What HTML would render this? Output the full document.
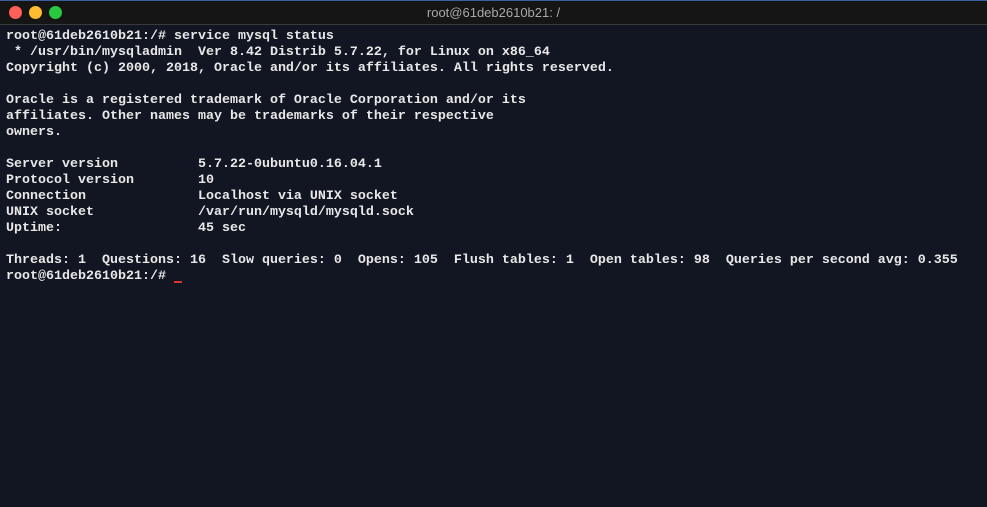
<!DOCTYPE html>
<html><head><style>
html,body{margin:0;padding:0;width:987px;height:507px;overflow:hidden;background:#121622;}
.tb{position:absolute;left:0;top:0;width:987px;height:25px;background:#151515;border-bottom:1px solid #3a3a3a;border-top:1px solid #3b5f9a;box-sizing:border-box;}
.d{position:absolute;top:5px;width:13px;height:13px;border-radius:50%;}
.t{position:absolute;left:0;right:0;top:4px;text-align:center;color:#a8a8a8;font:13px "Liberation Sans",sans-serif;}
pre{position:absolute;left:6px;top:29px;margin:0;font:bold 13.33px/16px "Liberation Mono",monospace;color:#e8e8e8;}
.cur{position:absolute;left:174px;top:281px;width:8px;height:2px;background:#e0302a;}
</style></head><body>
<div class="tb">
<div class="d" style="left:9px;background:#fe5f57"></div>
<div class="d" style="left:29px;background:#febc2e"></div>
<div class="d" style="left:49px;background:#28c840"></div>
<div class="t">root@61deb2610b21: /</div>
</div>
<pre>root@61deb2610b21:/# service mysql status
 * /usr/bin/mysqladmin  Ver 8.42 Distrib 5.7.22, for Linux on x86_64
Copyright (c) 2000, 2018, Oracle and/or its affiliates. All rights reserved.

Oracle is a registered trademark of Oracle Corporation and/or its
affiliates. Other names may be trademarks of their respective
owners.

Server version          5.7.22-0ubuntu0.16.04.1
Protocol version        10
Connection              Localhost via UNIX socket
UNIX socket             /var/run/mysqld/mysqld.sock
Uptime:                 45 sec

Threads: 1  Questions: 16  Slow queries: 0  Opens: 105  Flush tables: 1  Open tables: 98  Queries per second avg: 0.355
root@61deb2610b21:/# </pre>
<div class="cur"></div>
</body></html>
